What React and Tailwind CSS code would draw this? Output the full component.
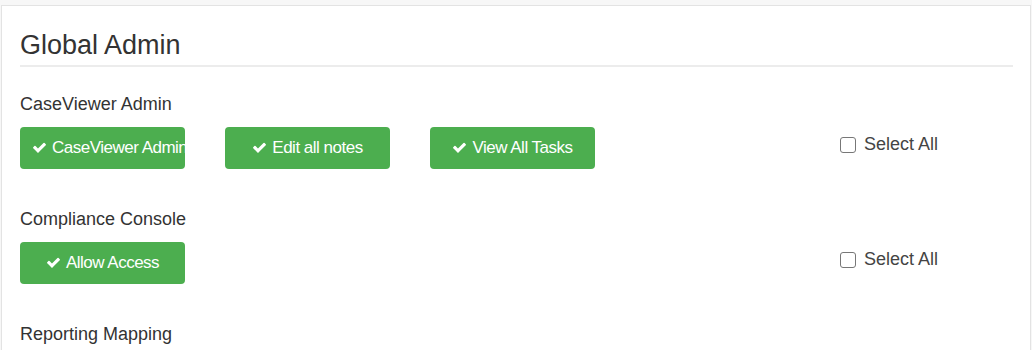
import React from 'react';

const Check = () => (
  <svg viewBox="0 0 1792 1792" className="w-[15px] h-[15px] inline-block mr-[5px] -mt-[3px] fill-white">
    <path d="M1671 566q0 40-28 68l-724 724-136 136q-28 28-68 28t-68-28l-136-136-362-362q-28-28-28-68t28-68l136-136q28-28 68-28t68 28l294 295 656-657q28-28 68-28t68 28l136 136q28 28 28 68z" />
  </svg>
);

const PermButton = ({ label }) => (
  <div className="w-[205px] shrink-0">
    <button className="w-[165px] h-[42px] px-[12px] rounded-[4px] bg-[#4cae4f] text-white text-[17px] whitespace-nowrap overflow-hidden text-center tracking-[-0.5px]">
      <Check />
      {label}
    </button>
  </div>
);

const SelectAll = () => (
  <label className="self-start flex items-center gap-[8px] pt-[4px] text-[18px] text-[#444]">
    <span className="w-[16px] h-[16px] rounded-[3px] border-[1.5px] border-[#777] bg-white" />
    Select All
  </label>
);

const Section = ({ title, buttons }) => (
  <div className="mb-[40px]">
    <div className="text-[18px] leading-[20px] text-[#333] mb-[13px]">{title}</div>
    <div className="flex">
      {buttons.map((b) => (
        <PermButton key={b} label={b} />
      ))}
      {Array.from({ length: 4 - buttons.length }).map((_, i) => (
        <div key={i} className="w-[205px] shrink-0" />
      ))}
      <SelectAll />
    </div>
  </div>
);

export default function App() {
  return (
    <div className="w-[1032px] h-[350px] overflow-hidden bg-[#f7f7f7] pt-[5px] pl-[1px] pr-[1px]" style={{ fontFamily: '"Liberation Sans", Arial, sans-serif' }}>
      <div className="h-full bg-white border-t border-l border-r border-[#e3e3e3] pl-[18px] pr-[17px]">
        <h3 className="text-[27px] leading-[30px] text-[#333] pt-[24px] pb-[5px] border-b-2 border-[#ececec]">
          Global Admin
        </h3>
        <div className="pt-[27px]">
          <Section title="CaseViewer Admin" buttons={['CaseViewer Admin', 'Edit all notes', 'View All Tasks']} />
          <Section title="Compliance Console" buttons={['Allow Access']} />
          <div className="text-[18px] leading-[20px] text-[#333]">Reporting Mapping</div>
        </div>
      </div>
    </div>
  );
}
